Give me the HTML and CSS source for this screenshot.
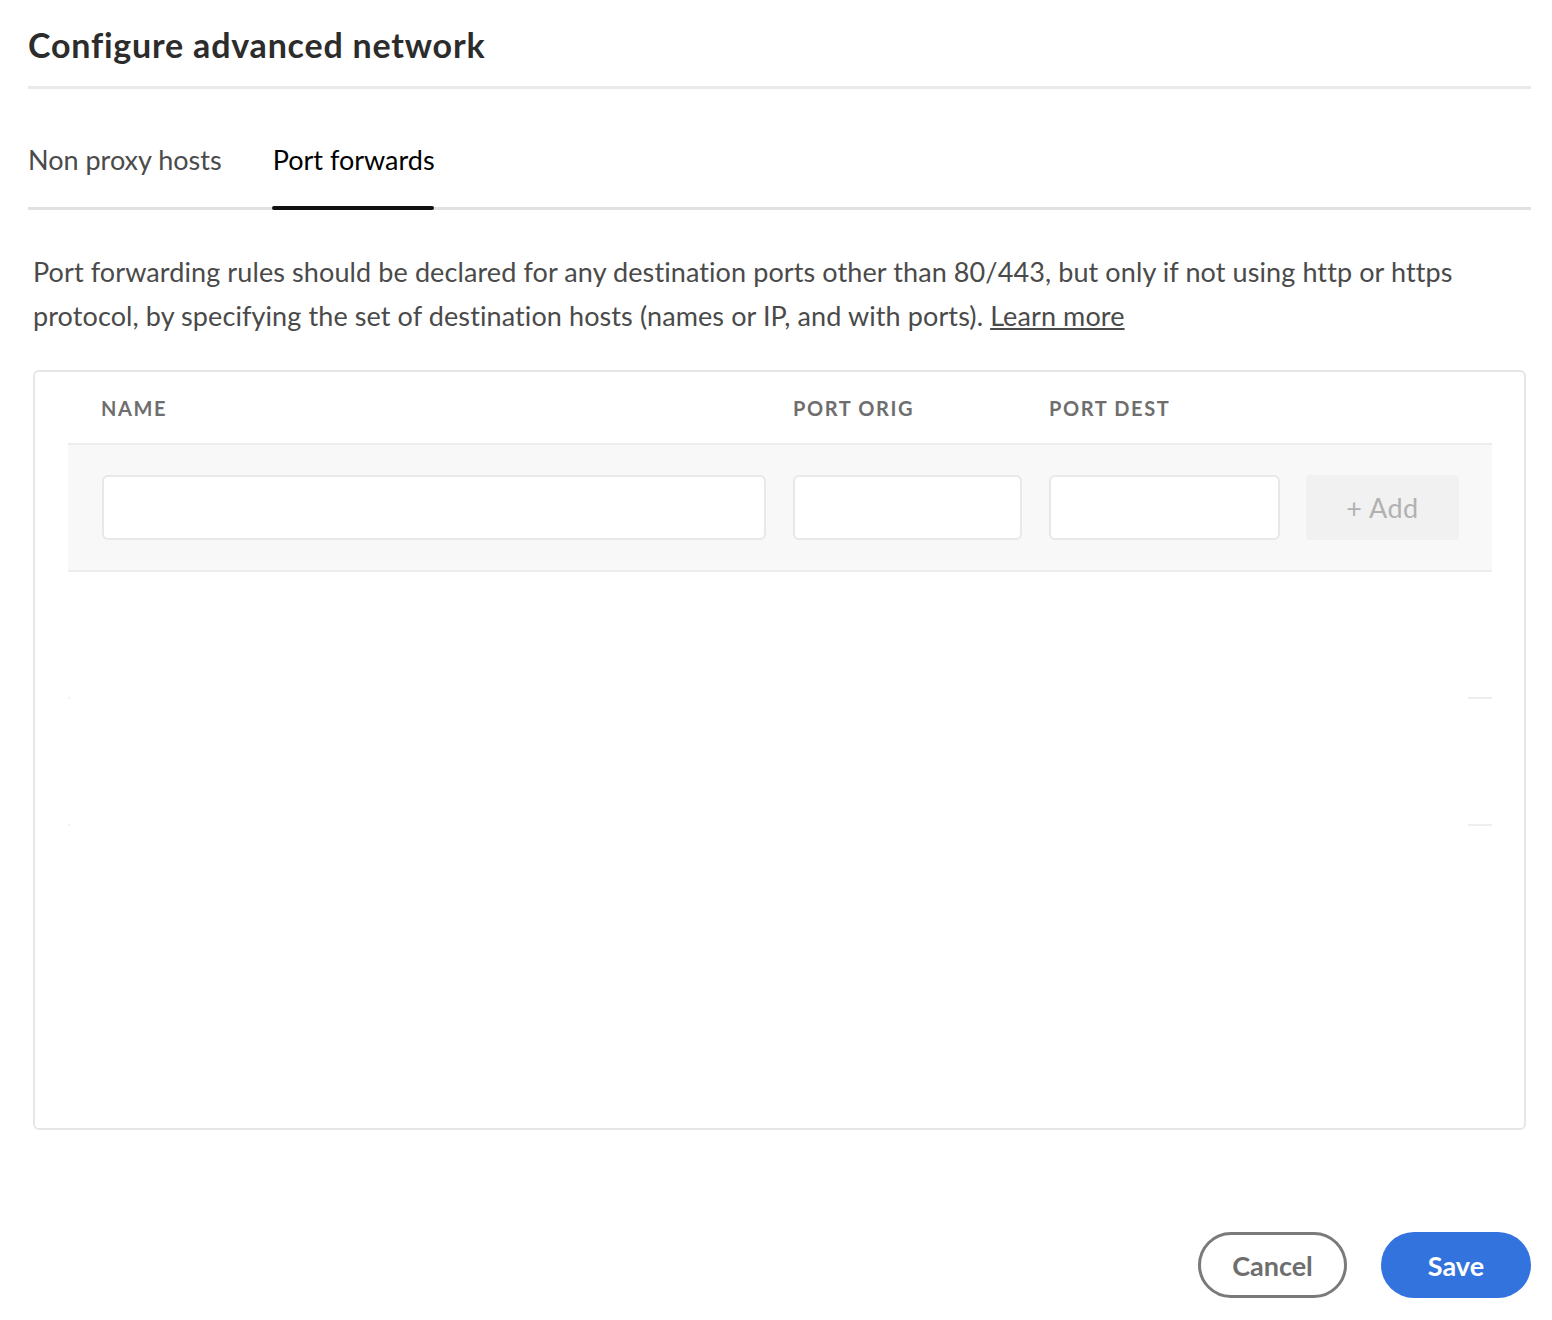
FILE: index.html
```html
<!DOCTYPE html>
<html lang="en">
<head>
    <meta charset="UTF-8">
    <meta name="viewport" content="width=device-width, initial-scale=1.0">
    <title>Configure advanced network</title>
    <link rel="stylesheet" href="styles.css">
</head>
<body>

    <div class="dialog">
        <header class="dialog-header">
            <h1>Configure advanced network</h1>
        </header>

        <nav class="tabs">
            <div class="tab">Non proxy hosts</div>
            <div class="tab selected">Port forwards</div>
        </nav>

        <p class="description">
            Port forwarding rules should be declared for any destination ports other than 80/443, but only if not using http or https
            protocol, by specifying the set of destination hosts (names or IP, and with ports). <a href="#">Learn more</a>
        </p>

        <div class="rules-table">
            <div class="cols table-head">
                <div>Name</div>
                <div>Port orig</div>
                <div>Port dest</div>
                <div></div>
            </div>

            <div class="cols input-row">
                <input type="text" class="field">
                <input type="text" class="field">
                <input type="text" class="field">
                <button class="add-btn" disabled>+ Add</button>
            </div>

            <!-- empty rows -->
            <div class="empty-row"></div>
            <div class="empty-row"></div>
        </div>

        <footer class="dialog-footer">
            <button class="btn btn-cancel">Cancel</button>
            <button class="btn btn-save">Save</button>
        </footer>
    </div>

</body>
</html>
```

FILE: styles.css
```css
body {
    margin: 0;
    font-family: Lato, 'Open Sans', sans-serif;
    color: #464646;
    background-color: #fff;
}
.dialog {
    padding: 0 21px 0 28px;
}
.dialog-header {
    padding-top: 23px;
    padding-bottom: 19px;
    border-bottom: 3px solid #e9e9e9;
}
.dialog-header h1 {
    margin: 0;
    font-size: 34px;
    line-height: 44px;
    font-weight: 700;
    letter-spacing: 0.8px;
    color: #2c2c2c;
}

/* Tabs */
.tabs {
    display: flex;
    border-bottom: 3px solid #e1e1e1;
}
.tab {
    position: relative;
    padding: 53px 0 29px;
    margin-right: 51px;
    font-size: 27px;
    line-height: 36px;
    color: #4b4b4b;
}
.tab.selected {
    color: #000;
}
.tab.selected::after {
    content: "";
    position: absolute;
    left: -1px;
    right: 1px;
    bottom: -3px;
    height: 4px;
    border-radius: 2px;
    background-color: #111;
}

.description {
    margin: 40px 0 32px;
    padding-left: 5px;
    font-size: 27px;
    line-height: 44px;
    letter-spacing: 0.1px;
    color: #4a4a4a;
}
.description a {
    color: #4a4a4a;
    text-decoration: underline;
}

/* Table */
.rules-table {
    margin: 0 5px;
    height: 760px;
    box-sizing: border-box;
    padding: 0 32px 0 33px;
    border: 2px solid #e6e6e6;
    border-radius: 6px;
}
.cols {
    display: grid;
    grid-template-columns: 664px 229px 231px 152px;
    column-gap: 27px;
    padding: 0 34px;
}
.cols > :nth-child(4) {
    margin-left: -1px;
}
.table-head {
    height: 71px;
    align-items: center;
    font-size: 20px;
    font-weight: 700;
    letter-spacing: 1.6px;
    text-transform: uppercase;
    color: #6e6e6e;
}
.table-head > div:first-child {
    margin-left: -1px;
}
.input-row {
    padding-top: 30px;
    padding-bottom: 30px;
    background-color: #f8f8f8;
    border-top: 2px solid #ededed;
    border-bottom: 2px solid #ededed;
}
.field {
    height: 65px;
    box-sizing: border-box;
    border: 2px solid #e8e8e8;
    border-radius: 6px;
    background-color: #fff;
    font-size: 24px;
    padding: 0 14px;
    outline: none;
}
.add-btn {
    height: 65px;
    border: none;
    border-radius: 4px;
    background-color: #f1f1f1;
    color: #b1b1b1;
    font-family: inherit;
    font-size: 27px;
    letter-spacing: 0.5px;
}
.empty-row {
    height: 127px;
    background:
        linear-gradient(#eeeeee, #eeeeee) right bottom / 24px 2px no-repeat,
        linear-gradient(#f2f2f2, #f2f2f2) left bottom / 2px 2px no-repeat;
}

/* Footer buttons */
.dialog-footer {
    display: flex;
    justify-content: flex-end;
    gap: 34px;
    margin-top: 102px;
}
.btn {
    height: 66px;
    box-sizing: border-box;
    border-radius: 33px;
    font-family: inherit;
    font-size: 27px;
    font-weight: 700;
    cursor: pointer;
}
.btn-cancel {
    width: 149px;
    border: 3px solid #7a7a7a;
    background-color: #fff;
    color: #6e6e6e;
}
.btn-save {
    width: 150px;
    border: none;
    background-color: #3273de;
    color: #fff;
}
```
